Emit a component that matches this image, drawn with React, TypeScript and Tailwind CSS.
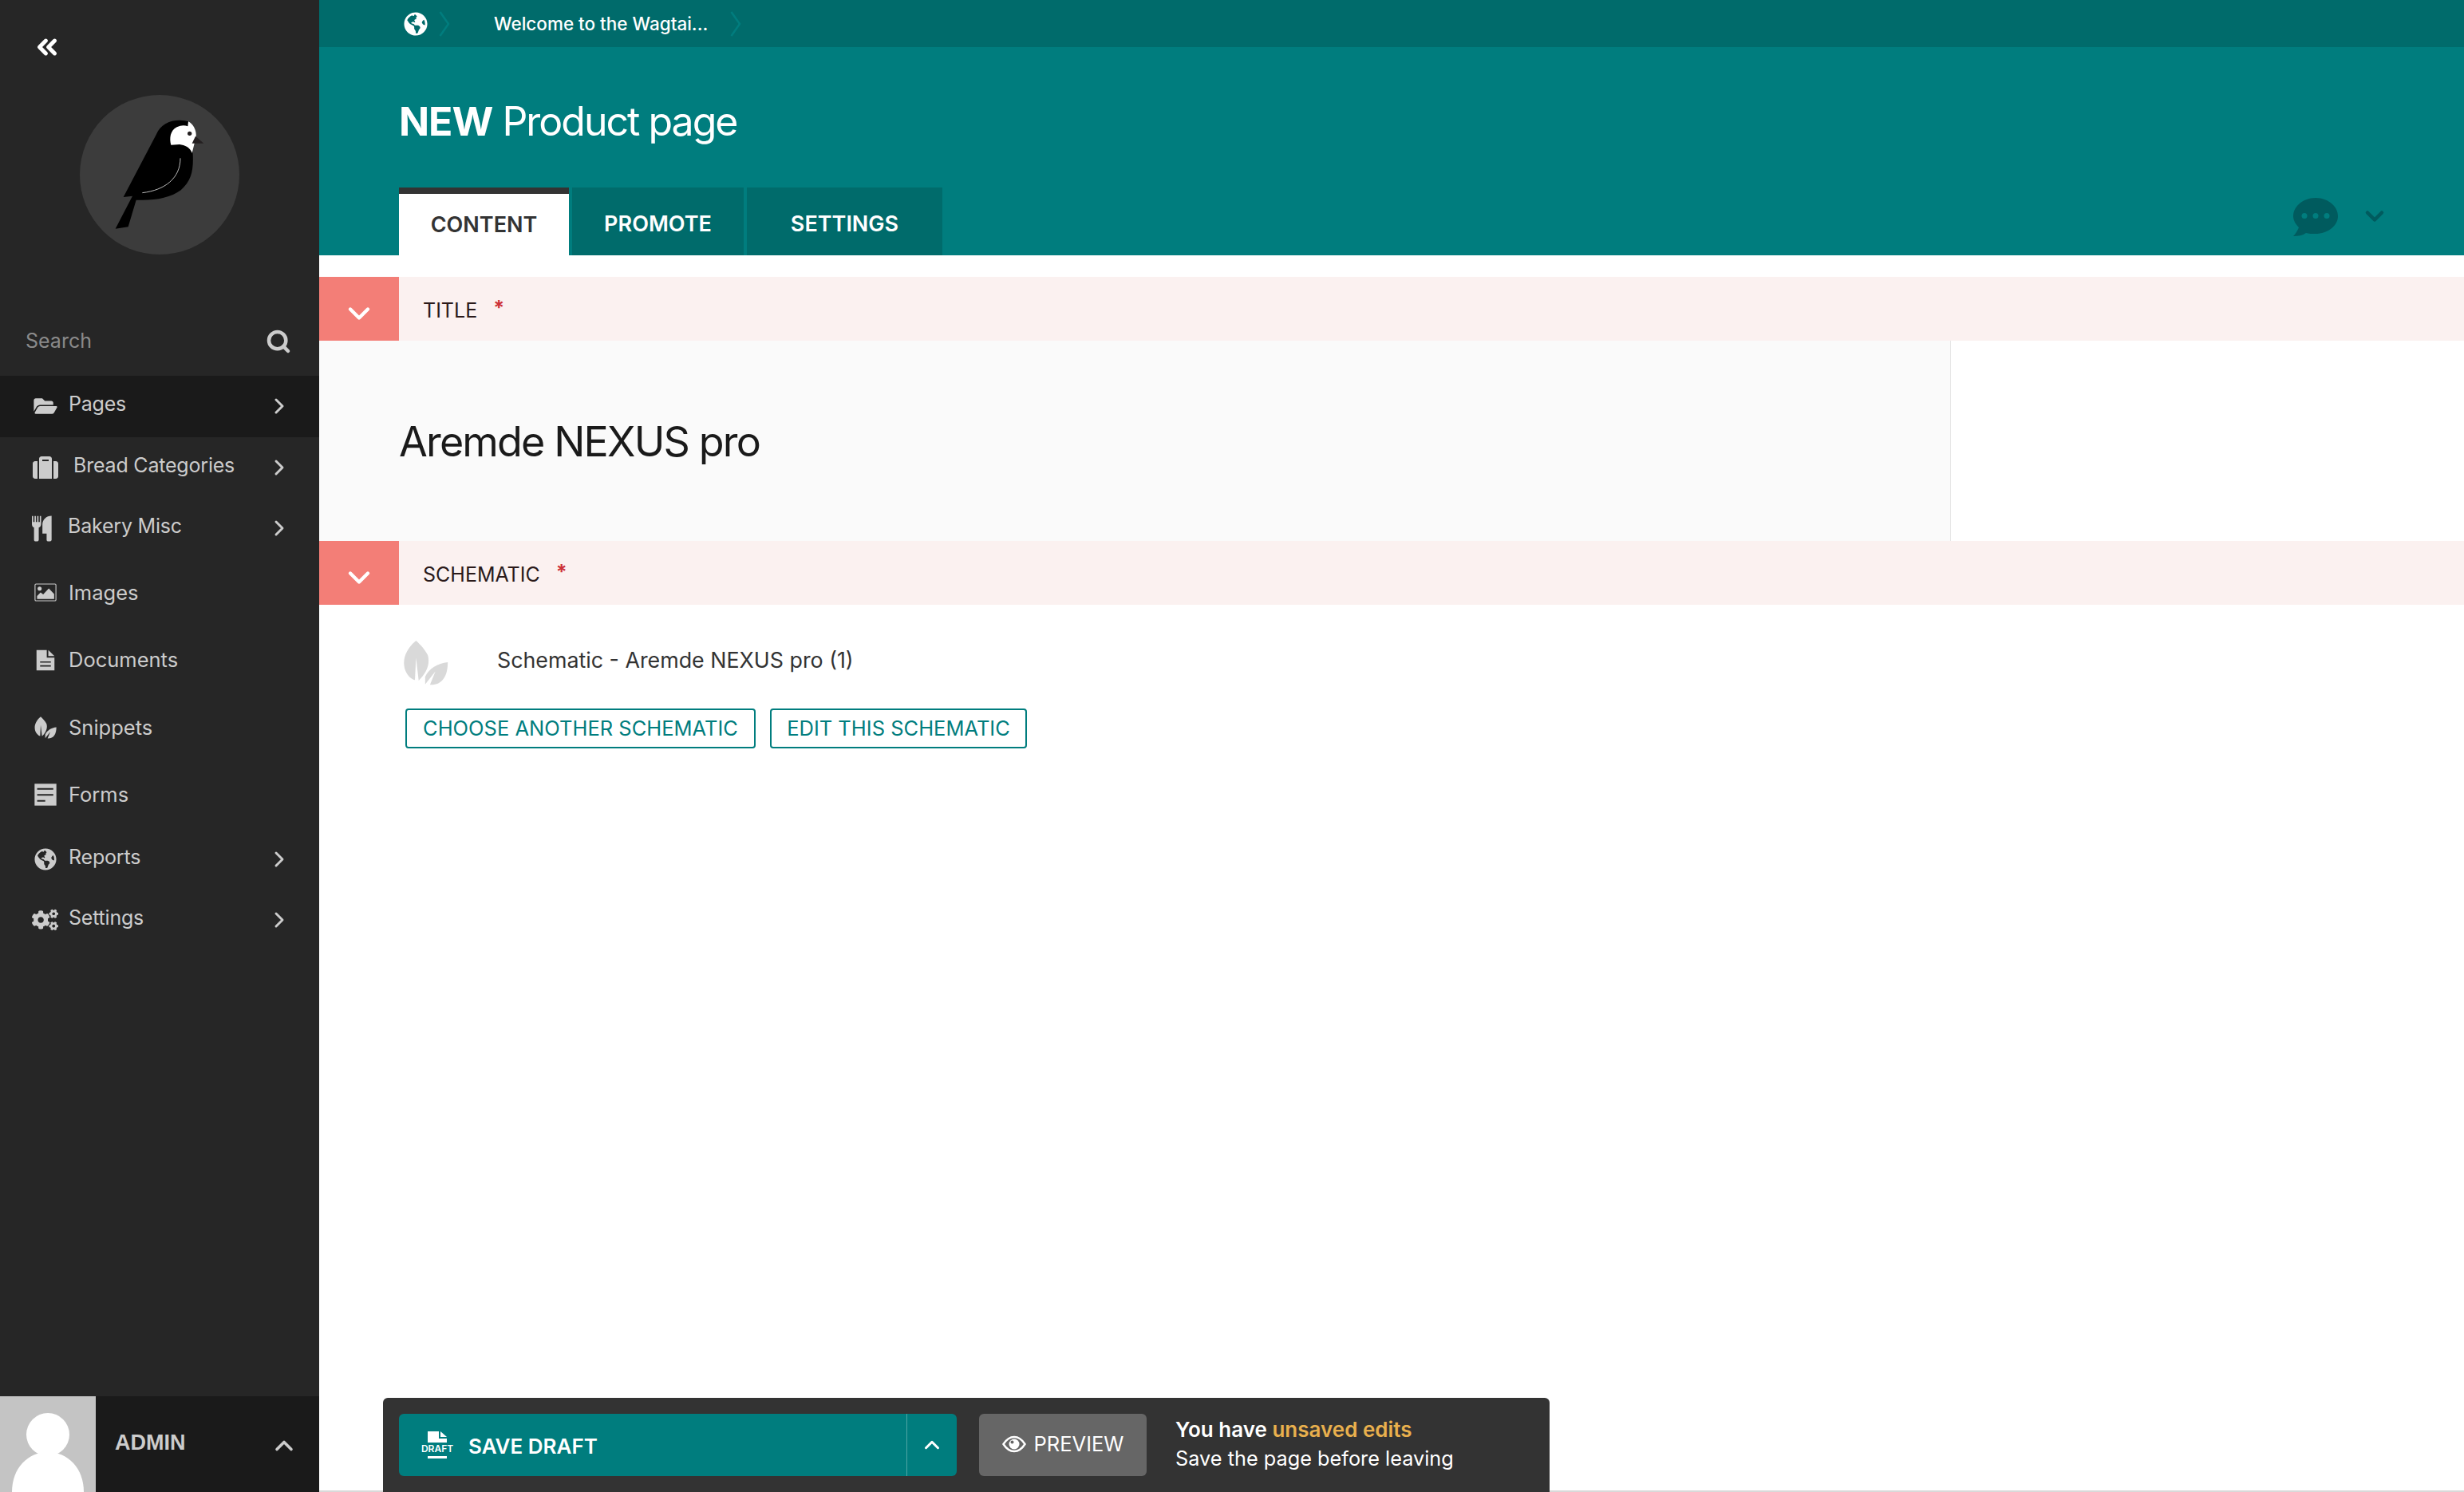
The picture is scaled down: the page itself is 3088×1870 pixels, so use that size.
import { ReactNode } from 'react';
import { ChevronDown, ChevronRight, ChevronUp, ChevronsLeft, Search } from 'lucide-react';
import { FaCogs, FaFolderOpen, FaGlobeAmericas, FaSuitcase } from 'react-icons/fa';

const font = { fontFamily: 'Inter, sans-serif' };

function BirdLogo() {
  return (
    <svg viewBox="-90 -33 600 600" className="w-[200px] h-[200px]">
      <circle cx="210" cy="267" r="300" fill="#3c3c3c" />
      <path
        fill="#000"
        d="M74 351 L198 115 C212 80 245 62 285 62 Q305 62 318 67 L335 190 C338 250 330 290 290 325 C250 355 190 365 122 362 L92 463 L44 470 L108 347 Z"
      />
      <path
        fill="#fff"
        d="M318 67 C335 75 350 100 347 125 L332 185 C325 165 305 155 285 153 L253 155 C246 130 250 100 275 88 C290 80 305 80 316 85 Z"
      />
      <path fill="#231f20" d="M345 122 L376 149 L332 149 Z" />
      <circle cx="323" cy="112" r="8" fill="#231f20" />
      <path fill="none" stroke="#ddd" strokeWidth="2.5" d="M288 205 C288 280 230 325 145 335" />
    </svg>
  );
}

function Leaves({ className }: { className: string }) {
  return (
    <svg viewBox="36 530 84 86" className={className} fill="currentColor">
      <path d="M60 533 C42 548 33 568 40 588 C44 598 52 605 58 606 L60 565 L65 607 C78 595 87 578 82 560 C77 550 68 540 60 533 Z" />
      <path d="M119 573 C100 575 84 585 77 600 L77 614 L96 590 L86 615 C108 616 119 600 119 573 Z" />
    </svg>
  );
}

function Utensils() {
  return (
    <svg viewBox="30 495 76 100" className="w-[25px] h-[33px]" fill="currentColor">
      <path d="M30 497 H35 V520 H40 V497 H45 V520 H50 V497 H55 V520 H60 V497 H65 V528 C65 535 60 540 56 541 V588 C56 592 52 594 47 594 C41 594 38 592 38 588 V541 C34 540 30 535 30 528 Z" />
      <path d="M105 496 V588 C105 592 100 594 95 594 C89 594 86 592 86 588 V564 H70 V530 C70 510 85 496 105 496 Z" />
    </svg>
  );
}

function ImageIcon() {
  return (
    <svg viewBox="36 30 86 72" className="w-[28px] h-[23px]">
      <rect x="38" y="33" width="82" height="66" rx="4" fill="none" stroke="currentColor" strokeWidth="3.5" />
      <circle cx="56" cy="51" r="8" fill="currentColor" />
      <path fill="currentColor" d="M46 92 V80 L60 66 L70 74 L92 50 L113 72 V92 Z" />
    </svg>
  );
}

function DocIcon() {
  return (
    <svg viewBox="42 82 74 84" className="w-[24px] h-[27px]">
      <path fill="currentColor" d="M44 84 H84 V114 H114 V164 H44 Z" />
      <path fill="currentColor" d="M90 84 L114 108 H90 Z" />
      <path stroke="#262626" strokeWidth="5" d="M58 131 H100 M58 146 H100" />
    </svg>
  );
}

function FormIcon() {
  return (
    <svg viewBox="36 785 84 86" className="w-[28px] h-[28px]">
      <path fill="currentColor" d="M36 786 H120 V870 H36 Z" />
      <path stroke="#262626" strokeWidth="6" d="M46 806 H108 M46 829 H108 M46 852 H77" />
    </svg>
  );
}

function SpeechBubble() {
  return (
    <svg viewBox="0 0 56 48" className="w-[56px] h-[48px]">
      <path
        fill="#005b5e"
        d="M28 0 C43 0 56 10 56 23 C56 35 43 45 28 45 C23 45 19 45 16 44 C12 47 6 48 0 48 C3 45 6 40 7 37 C3 33 0 28 0 23 C0 10 13 0 28 0 Z"
      />
      <circle cx="14" cy="22.5" r="3.5" fill="#007d7e" />
      <circle cx="28" cy="22.5" r="3.5" fill="#007d7e" />
      <circle cx="42" cy="22.5" r="3.5" fill="#007d7e" />
    </svg>
  );
}

function EyeIcon() {
  return (
    <svg viewBox="0 0 30 22" className="w-[30px] h-[22px]">
      <path fill="none" stroke="#fff" strokeWidth="2.5" d="M1.5 11 C6 4 10 2 15 2 C20 2 24 4 28.5 11 C24 18 20 20 15 20 C10 20 6 18 1.5 11 Z" />
      <circle cx="15" cy="11" r="6.5" fill="#fff" />
      <circle cx="12.5" cy="8.5" r="2" fill="#666" />
    </svg>
  );
}

function AvatarPerson() {
  return (
    <svg viewBox="0 0 120 120" className="w-[120px] h-[120px]">
      <circle cx="60" cy="48" r="27" fill="#fff" />
      <path fill="#fff" d="M15 120 C15 90 35 70 60 70 C85 70 105 90 105 120 Z" />
    </svg>
  );
}

function DraftIcon() {
  return (
    <div className="flex flex-col items-center w-[40px]">
      <svg viewBox="0 0 24 14" className="w-[24px] h-[14px]">
        <path fill="#fff" d="M0 0 H14 V9 H24 V14 H0 Z" />
        <path fill="#fff" d="M16 0 L24 7 H16 Z" />
      </svg>
      <span className="text-[12px] leading-[12px] font-semibold text-white mt-[2px]">DRAFT</span>
      <div className="w-[24px] h-[3px] bg-white mt-[3px]" />
    </div>
  );
}

function CrumbChevron() {
  return (
    <svg viewBox="0 0 14 32" className="w-[14px] h-[32px] shrink-0" fill="none" stroke="#007d7e" strokeWidth="2.5">
      <path d="M1.5 1 L12 16 L1.5 31" />
    </svg>
  );
}

type NavItem = { label: string; icon: ReactNode; sub?: boolean; active?: boolean; textClass?: string; iconClass?: string };

const navItems: NavItem[] = [
  { label: 'Pages', icon: <FaFolderOpen className="w-[30px] h-[26px]" />, sub: true, active: true, textClass: 'ml-[13px]' },
  { label: 'Bread Categories', icon: <FaSuitcase className="w-[32px] h-[32px]" />, sub: true, textClass: 'ml-[19px]' },
  { label: 'Bakery Misc', icon: <Utensils />, sub: true, iconClass: '-translate-x-[4px]', textClass: 'ml-[12px]' },
  { label: 'Images', icon: <ImageIcon />, textClass: 'ml-[13px]' },
  { label: 'Documents', icon: <DocIcon />, textClass: 'ml-[13px]' },
  { label: 'Snippets', icon: <Leaves className="w-[28px] h-[29px]" />, textClass: 'ml-[13px]' },
  { label: 'Forms', icon: <FormIcon />, textClass: 'ml-[13px]' },
  { label: 'Reports', icon: <FaGlobeAmericas className="w-[28px] h-[28px]" />, sub: true, textClass: 'ml-[13px]' },
  { label: 'Settings', icon: <FaCogs className="w-[34px] h-[28px]" />, sub: true, textClass: 'ml-[13px]' },
];

function Sidebar() {
  return (
    <aside className="w-[400px] shrink-0 h-full bg-[#262626] flex flex-col">
      <div className="h-[119px] pl-[40px] pt-[40px] text-white">
        <ChevronsLeft className="w-[38px] h-[38px]" strokeWidth={3.2} />
      </div>
      <div className="flex justify-center">
        <BirdLogo />
      </div>
      <div className="h-[152px] pl-[32px] pr-[35px] pt-[88px] flex items-start justify-between">
        <span className="text-[25px] leading-[40px] text-[#8a8a8a]">Search</span>
        <Search className="w-[32px] h-[32px] mt-[5px] text-[#cccccc]" strokeWidth={3.4} />
      </div>
      <nav className="flex-1">
        {navItems.map((item) => (
          <div
            key={item.label}
            className={`flex items-center pl-[40px] text-[#cccccc] ${item.sub ? 'h-[76.5px]' : 'h-[84.5px]'} ${item.active ? 'bg-[#1a1a1a]' : ''}`}
          >
            <span className={`w-[33px] flex justify-center ${item.iconClass ?? ''}`}>{item.icon}</span>
            <span className={`leading-[36px] ${item.sub ? 'text-[25px] tracking-[-0.2px] pb-[6px]' : 'text-[25.5px]'} ${item.textClass ?? ''}`}>
              {item.label}
            </span>
            {item.sub && <ChevronRight className="ml-auto mr-[34px] w-[32px] h-[32px]" strokeWidth={2.2} />}
          </div>
        ))}
      </nav>
      <div className="h-[120px] bg-[#1a1a1a] flex items-start">
        <div className="w-[120px] h-[120px] bg-[#c4c4c4]">
          <AvatarPerson />
        </div>
        <span
          className="ml-[24px] mt-[42px] text-[27px] leading-[32px] font-bold text-[#cccccc]"
          style={{ fontFamily: '"Liberation Sans", sans-serif' }}
        >
          ADMIN
        </span>
        <ChevronUp className="ml-auto mr-[26px] mt-[44px] w-[36px] h-[36px] text-[#cccccc]" strokeWidth={2.4} />
      </div>
    </aside>
  );
}

function Header() {
  return (
    <header className="h-[320px] bg-[#007d7e] flex flex-col text-white">
      <div className="h-[59px] bg-[#006b6b] flex items-center pl-[106px] text-[22.5px] font-medium">
        <FaGlobeAmericas className="w-[30px] h-[30px]" />
        <span className="ml-[14px]">
          <CrumbChevron />
        </span>
        <span className="ml-[55px] w-[296px]">Welcome to the Wagtai...</span>
        <CrumbChevron />
      </div>
      <h1 className="pl-[100px] mt-[62px] h-[114px] text-[50px] leading-[62px] tracking-[-2px]">
        <span className="font-bold tracking-[-1px]">NEW</span> Product page
      </h1>
      <div className="flex items-end pl-[100px] pr-[94px]">
        <div className="w-[213px] h-[85px] bg-white border-t-[8px] border-[#333333] text-[#333333] text-[27px] font-semibold flex items-center justify-center pt-[1px]">
          CONTENT
        </div>
        <div className="ml-[4px] w-[215px] h-[85px] bg-[#006b6b] text-[27px] font-semibold flex items-center justify-center pt-[8px]">
          PROMOTE
        </div>
        <div className="ml-[4px] w-[245px] h-[85px] bg-[#006b6b] text-[27px] font-semibold flex items-center justify-center pt-[8px]">
          SETTINGS
        </div>
        <div className="ml-auto flex items-start self-stretch pt-[13px]">
          <SpeechBubble />
          <ChevronDown className="ml-[28px] mt-[5px] w-[36px] h-[36px] text-[#005b5e]" strokeWidth={3} />
        </div>
      </div>
    </header>
  );
}

function SectionBand({ label }: { label: string }) {
  return (
    <div className="h-[80px] bg-[#fbf1f0] flex">
      <div className="w-[100px] bg-[#f37e77] flex items-center justify-center pt-[12px] text-white">
        <ChevronDown className="w-[44px] h-[44px]" strokeWidth={2.4} />
      </div>
      <div className="pl-[30px] pt-[5px] flex items-center text-[25px] text-[#2a1a1a]">
        {label}
        <span className="ml-[20px] text-[#cd3238] font-bold -mt-[6px]">*</span>
      </div>
    </div>
  );
}

function OutlineButton({ children, className }: { children: ReactNode; className: string }) {
  return (
    <button className={`h-[50px] pt-[1px] border-2 border-[#007d7e] rounded-[4px] text-[25.5px] text-[#007d7e] flex items-center justify-center ${className}`}>
      {children}
    </button>
  );
}

function ActionBar() {
  return (
    <div className="h-[118px] relative">
      <div className="absolute left-0 right-0 bottom-0 h-[2px] bg-[#d9d9d9]" />
      <div className="absolute left-[80px] top-0 bottom-0 w-[1462px] bg-[#333333] rounded-t-[6px] flex items-start pt-[20px] pl-[20px] text-white">
        <div className="w-[699px] h-[78px] bg-[#007d7e] rounded-[6px] flex items-center">
          <div className="ml-[28px]">
            <DraftIcon />
          </div>
          <span className="ml-[19px] pt-[2px] text-[26px] font-semibold">SAVE DRAFT</span>
          <div className="ml-auto w-[63px] h-full border-l border-[#4fa5a5] flex items-center justify-center">
            <ChevronUp className="w-[30px] h-[30px]" strokeWidth={2.4} />
          </div>
        </div>
        <div className="ml-[28px] w-[210px] h-[78px] bg-[#666666] rounded-[6px] flex items-center justify-center gap-[10px] text-[25.5px] pb-[2px]">
          <EyeIcon />
          PREVIEW
        </div>
        <div className="ml-[36px] pt-[2px] leading-[36px]">
          <div className="font-semibold text-[26px]">
            You have <span className="text-[#e9b04d]">unsaved edits</span>
          </div>
          <div className="text-[25.3px]">Save the page before leaving</div>
        </div>
      </div>
    </div>
  );
}

export default function App() {
  return (
    <div className="w-screen h-screen flex overflow-hidden bg-white" style={font}>
      <Sidebar />
      <main className="flex-1 h-full flex flex-col min-w-0">
        <Header />
        <div className="h-[27px]" />
        <SectionBand label="TITLE" />
        <div className="h-[251px] flex">
          <div className="w-[2045px] bg-[#fafafa] border-r border-[#e6e6e6] pl-[100px] pt-[97px] text-[52px] leading-[60px] text-[#1a1a1a] tracking-[-1.85px]">
            Aremde NEXUS pro
          </div>
        </div>
        <SectionBand label="SCHEMATIC" />
        <div className="flex-1 pl-[105px] pt-[43px]">
          <div className="flex items-center">
            <Leaves className="w-[57px] h-[58px] text-[#d9d9d9]" />
            <span className="ml-[61px] text-[26.8px] text-[#333333] -mt-[6px]">Schematic - Aremde NEXUS pro (1)</span>
          </div>
          <div className="flex mt-[29px] ml-[3px] gap-[18px]">
            <OutlineButton className="w-[439px]">CHOOSE ANOTHER SCHEMATIC</OutlineButton>
            <OutlineButton className="w-[322px]">EDIT THIS SCHEMATIC</OutlineButton>
          </div>
        </div>
        <ActionBar />
      </main>
    </div>
  );
}
